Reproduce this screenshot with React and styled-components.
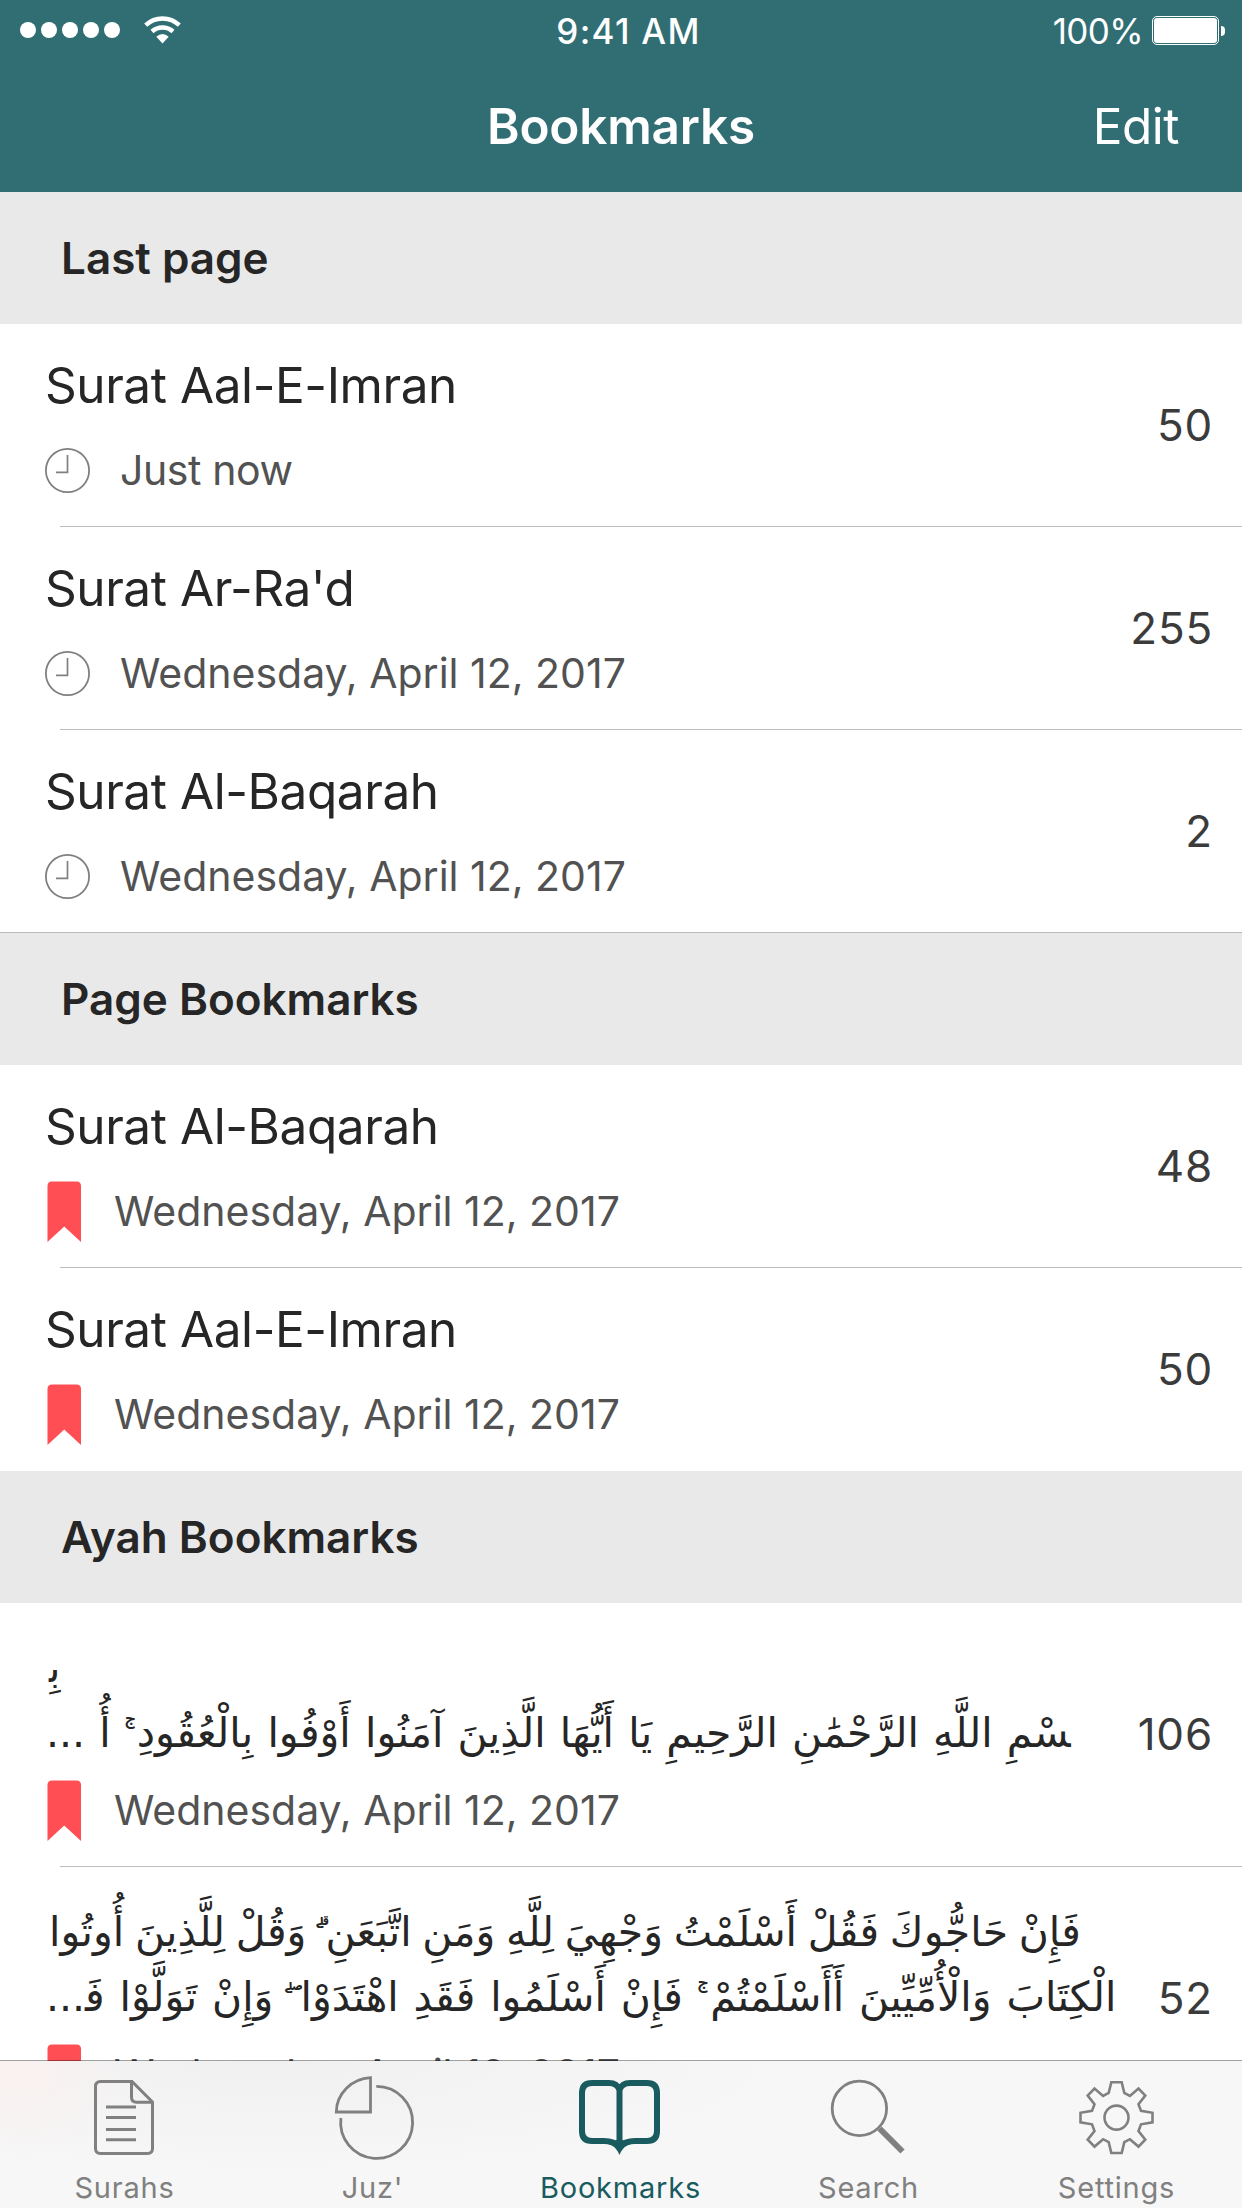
import React from 'react';
import styled, { createGlobalStyle } from 'styled-components';

const GlobalStyle = createGlobalStyle`
  * { box-sizing: border-box; }
  body {
    margin: 0;
    background: #fff;
    font-family: Inter, "Liberation Sans", sans-serif;
  }
`;

const Screen = styled.div`
  display: flex;
  flex-direction: column;
  width: 1242px;
  height: 2208px;
  overflow: hidden;
  background: #fff;
`;

const Header = styled.header`
  flex: none;
  height: 192px;
  background: #306e74;
  color: #fff;
`;

const StatusBar = styled.div`
  display: grid;
  grid-template-columns: 1fr auto 1fr;
  align-items: center;
  height: 60px;
  padding: 0 17px 0 20px;
`;

const Signal = styled.div`
  display: flex;
  align-items: center;
  gap: 5px;
`;

const SignalDot = styled.span`
  width: 16px;
  height: 16px;
  border-radius: 50%;
  background: #fff;
`;

const WifiIcon = styled.svg`
  width: 37px;
  height: 28px;
  margin-left: 19px;
`;

const Clock = styled.div`
  padding-top: 1px;
  font-size: 35px;
  font-weight: 500;
  line-height: 42px;
  letter-spacing: 1.3px;
  margin-left: 12px;
`;

const Power = styled.div`
  display: flex;
  align-items: center;
  justify-content: flex-end;
`;

const Percent = styled.span`
  padding-top: 1px;
  margin-right: 9px;
  font-size: 35px;
  line-height: 42px;
  letter-spacing: -0.6px;
`;

const BatteryBody = styled.span`
  width: 67px;
  height: 29px;
  margin-top: 1px;
  padding: 1px;
  border: 1px solid #fff;
  border-radius: 5px;
`;

const BatteryLevel = styled.span`
  display: block;
  height: 100%;
  border-radius: 3px;
  background: #fff;
`;

const BatteryTip = styled.span`
  width: 4px;
  height: 10px;
  margin: 1px 0 0 2px;
  border-radius: 0 4px 4px 0;
  background: #fff;
`;

const NavBar = styled.div`
  display: grid;
  grid-template-columns: 1fr auto 1fr;
  align-items: center;
  height: 132px;
  padding: 0 63px;
`;

const NavTitle = styled.h1`
  grid-column: 2;
  margin: 0;
  font-size: 49.5px;
  font-weight: 600;
  line-height: 60px;
  letter-spacing: -0.2px;
`;

const NavAction = styled.button`
  justify-self: end;
  padding: 0;
  border: 0;
  background: none;
  color: inherit;
  font: 400 49.5px/60px Inter, "Liberation Sans", sans-serif;
  letter-spacing: -0.5px;
`;

const List = styled.main`
  flex: 1;
  min-height: 0;
  overflow: hidden;
`;

const SectionHeader = styled.h2`
  height: 132px;
  margin: 0;
  padding-left: 61px;
  background: #e9e9e9;
  color: #262626;
  font-size: 44px;
  font-weight: 600;
  line-height: 132px;
`;

const Row = styled.div`
  display: flex;
  align-items: center;
  justify-content: space-between;
  height: ${(p) => (p.$tall ? 264 : 203)}px;
  padding-right: 29px;
  background: linear-gradient(#bcbbc1, #bcbbc1) no-repeat ${(p) => (p.$line === 'full' ? 0 : 60)}px 100% / ${(p) => (p.$line === 'none' ? '0 0' : '100% 1px')};
`;

const RowBody = styled.div`
  align-self: stretch;
  display: flex;
  flex-direction: column;
  justify-content: flex-end;
  padding: 0 0 32px 46px;
`;

const RowTitle = styled.div`
  margin: 0 0 30px -1px;
  color: #262626;
  font-size: 49.5px;
  line-height: 60px;
  letter-spacing: -0.43px;
  white-space: nowrap;
`;

const Verse = styled.div`
  display: flex;
  flex-direction: column;
  align-items: flex-start;
  margin-bottom: 19px;
  color: #262626;
`;

const VerseLine = styled.div`
  direction: rtl;
  height: 65px;
  margin-left: ${(p) => p.$shift || 0}px;
  font-family: "DejaVu Sans", "Noto Sans Arabic", sans-serif;
  font-size: 41px;
  line-height: 65px;
  word-spacing: ${(p) => p.$space || 0}px;
  white-space: nowrap;
`;

const RowMeta = styled.div`
  display: flex;
  align-items: center;
  height: 50px;
  color: #525252;
  font-size: 41px;
  line-height: 50px;
`;

const MetaText = styled.span`
  white-space: nowrap;
  letter-spacing: ${(p) => p.$spacing || 0}px;
`;

const PageNumber = styled.div`
  margin-bottom: 2px;
  color: #3b3b3b;
  font-size: 44px;
  line-height: 54px;
  letter-spacing: 0.8px;
`;

const ClockSvg = styled.svg`
  width: 45px;
  height: 45px;
  margin: 1px 30px 0 -1px;
`;

const RibbonSvg = styled.svg`
  width: 34px;
  height: 61px;
  margin: 1px 33px 0 1px;
`;

const TabBar = styled.nav`
  position: relative;
  flex: none;
  display: flex;
  height: 148px;
  margin-top: -1px;
  border-top: 1px solid rgba(0, 0, 0, 0.37);
  background:
    radial-gradient(ellipse 110px 90px at 20px 10px, #f9f1f0, rgba(249, 241, 240, 0)),
    radial-gradient(ellipse 520px 110px at 270px 0, #f0f0f0, rgba(247, 247, 247, 0)),
    #f7f7f7;
  background-clip: padding-box;
`;

const Tab = styled.div`
  display: flex;
  flex-direction: column;
  align-items: center;
  width: 248px;
  padding-top: 12px;
  color: ${(p) => (p.$active ? '#195b5f' : '#808080')};
`;

const TabIcon = styled.svg`
  width: 90px;
  height: 90px;
  fill: none;
  stroke: currentColor;
  stroke-width: 3;
`;

const TabLabel = styled.span`
  margin: 8px 0 0 1px;
  font-size: 29px;
  line-height: 34px;
  letter-spacing: 0.8px;
`;

const ClockIcon = () => (
  <ClockSvg viewBox="0 0 45 45" fill="none" stroke="#808080">
    <circle cx="22.5" cy="22.5" r="21.6" strokeWidth="1.8" />
    <path d="M22.5 7V24.3H11" strokeWidth="1.7" />
  </ClockSvg>
);

const RibbonIcon = () => (
  <RibbonSvg viewBox="0 0 34 61">
    <path d="M0.5 61V5Q0.5 0.5 5 0.5H29.5Q34 0.5 34 5V61L17.2 45.5Z" fill="#ff4e54" />
  </RibbonSvg>
);

const quarter = [[5.2, -35.4], [7.8, -24.6], [13.4, -21.6], [22, -29], [28.8, -22], [22, -13.4], [24.5, -6.7], [36, -4.8]];
const half = [...quarter, ...[...quarter].reverse().map(([x, y]) => [x, -y])];
const gearPoints = [...half, ...[...half].reverse().map(([x, y]) => [-x, y])]
  .map(([x, y]) => `${45.5 + x},${44.6 + y}`)
  .join(' ');

const tabs = [
  {
    label: 'Surahs',
    icon: (
      <>
        <path d="M21.5 8.5H53L73.5 29V75.5Q73.5 80.5 68.5 80.5H21.5Q16.5 80.5 16.5 75.5V13.5Q16.5 8.5 21.5 8.5Z" />
        <path d="M52.5 8.5V24Q52.5 29.3 57.5 29.3H73.5" />
        <path d="M27 34H57M27 44.5H57M27 56.5H57M27 66.8H57" />
      </>
    ),
  },
  {
    label: "Juz'",
    icon: (
      <>
        <path d="M43.5 4.7V39H9.3A36 35 0 0 1 43.5 4.7Z" strokeWidth="2.8" />
        <path d="M49.3 13.4A36 36 0 1 1 13.9 45" strokeWidth="2.8" />
      </>
    ),
  },
  {
    label: 'Bookmarks',
    active: true,
    icon: (
      <>
        <path
          strokeWidth="6"
          d="M44.5 17C43 12.5 39 10 34 10H17Q7 10 7 20V58Q7 68 17 68H29C37 68 41 70 44.5 74C48 70 52 68 60 68H72Q82 68 82 58V20Q82 10 72 10H55C50 10 46 12.5 44.5 17V74"
        />
        <path stroke="none" fill="currentColor" d="M31 70.8C38 71.5 42 76 44.5 82C47 76 51 71.5 58 70.8L44.5 66Z" />
      </>
    ),
  },
  {
    label: 'Search',
    icon: (
      <>
        <circle cx="36.4" cy="35.4" r="27.2" strokeWidth="2.8" />
        <path d="M56.5 55.5L79.5 78.5" strokeWidth="6" />
      </>
    ),
  },
  {
    label: 'Settings',
    icon: (
      <>
        <polygon points={gearPoints} strokeWidth="2.6" />
        <circle cx="45.5" cy="44.6" r="12" strokeWidth="2.6" />
      </>
    ),
  },
];

const ayahs = [
  {
    page: 106,
    lines: [
      { text: 'بِ\u200d', shift: 3 },
      {
        text: '\u200dسْمِ اللَّهِ الرَّحْمَٰنِ الرَّحِيمِ يَا أَيُّهَا الَّذِينَ آمَنُوا أَوْفُوا بِالْعُقُودِ ۚ أُ ...',
        space: 1.2,
      },
    ],
  },
  {
    page: 52,
    lines: [
      {
        text: 'فَإِنْ حَاجُّوكَ فَقُلْ أَسْلَمْتُ وَجْهِيَ لِلَّهِ وَمَنِ اتَّبَعَنِ ۗ وَقُلْ لِلَّذِينَ أُوتُوا',
        space: -2.3,
        shift: 3,
      },
      {
        text: 'الْكِتَابَ وَالْأُمِّيِّينَ أَأَسْلَمْتُمْ ۚ فَإِنْ أَسْلَمُوا فَقَدِ اهْتَدَوْا ۖ وَإِنْ تَوَلَّوْا فَ\u200d...',
        space: 1.8,
      },
    ],
  },
];

const DATE = 'Wednesday, April 12, 2017';

const PageRow = ({ title, when, page, icon, line }) => (
  <Row $line={line}>
    <RowBody>
      <RowTitle>{title}</RowTitle>
      <RowMeta>
        {icon}
        <MetaText $spacing={when === DATE ? 0 : -0.4}>{when}</MetaText>
      </RowMeta>
    </RowBody>
    <PageNumber>{page}</PageNumber>
  </Row>
);

const AyahRow = ({ lines, page }) => (
  <Row $tall>
    <RowBody>
      <Verse>
        {lines.map((l) => (
          <VerseLine key={l.text} $space={l.space} $shift={l.shift}>
            {l.text}
          </VerseLine>
        ))}
      </Verse>
      <RowMeta>
        <RibbonIcon />
        <MetaText>{DATE}</MetaText>
      </RowMeta>
    </RowBody>
    <PageNumber>{page}</PageNumber>
  </Row>
);

export default function App() {
  return (
    <Screen>
      <GlobalStyle />
      <Header>
        <StatusBar>
          <Signal>
            {[0, 1, 2, 3, 4].map((i) => (
              <SignalDot key={i} />
            ))}
            <WifiIcon viewBox="0 0 37 28" fill="none" stroke="#fff" strokeWidth="4.4">
              <path d="M1.7 9.2A24.3 24.3 0 0 1 35.3 9.2" />
              <path d="M8 15.5A15.6 15.6 0 0 1 29 15.5" />
              <path d="M12.3 20.8Q18.5 15.4 24.7 20.8L18.5 27.4Z" fill="#fff" stroke="none" />
            </WifiIcon>
          </Signal>
          <Clock>9:41 AM</Clock>
          <Power>
            <Percent>100%</Percent>
            <BatteryBody>
              <BatteryLevel />
            </BatteryBody>
            <BatteryTip />
          </Power>
        </StatusBar>
        <NavBar>
          <NavTitle>Bookmarks</NavTitle>
          <NavAction>Edit</NavAction>
        </NavBar>
      </Header>
      <List>
        <SectionHeader>Last page</SectionHeader>
        <PageRow title="Surat Aal-E-Imran" when="Just now" page={50} icon={<ClockIcon />} />
        <PageRow title="Surat Ar-Ra'd" when={DATE} page={255} icon={<ClockIcon />} />
        <PageRow title="Surat Al-Baqarah" when={DATE} page={2} icon={<ClockIcon />} line="full" />
        <SectionHeader>Page Bookmarks</SectionHeader>
        <PageRow title="Surat Al-Baqarah" when={DATE} page={48} icon={<RibbonIcon />} />
        <PageRow title="Surat Aal-E-Imran" when={DATE} page={50} icon={<RibbonIcon />} line="none" />
        <SectionHeader>Ayah Bookmarks</SectionHeader>
        {ayahs.map((a) => (
          <AyahRow key={a.page} {...a} />
        ))}
      </List>
      <TabBar>
        {tabs.map((t) => (
          <Tab key={t.label} $active={t.active}>
            <TabIcon viewBox="0 0 90 90">{t.icon}</TabIcon>
            <TabLabel>{t.label}</TabLabel>
          </Tab>
        ))}
      </TabBar>
    </Screen>
  );
}
